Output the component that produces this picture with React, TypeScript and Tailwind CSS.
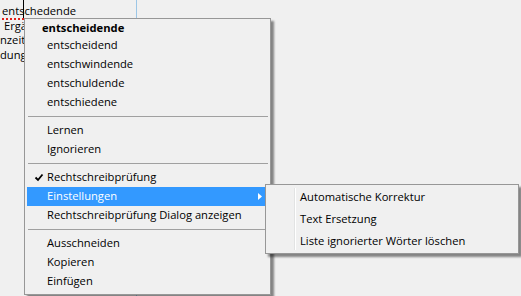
const font = { fontFamily: '"Open Sans", "Noto Sans", sans-serif' };

type Item =
  | { kind: "header"; label: string }
  | { kind: "item"; label: string; checked?: boolean; active?: boolean; sub?: boolean }
  | { kind: "sep" };

const items: Item[] = [
  { kind: "header", label: "entscheidende" },
  { kind: "item", label: "entscheidend" },
  { kind: "item", label: "entschwindende" },
  { kind: "item", label: "entschuldende" },
  { kind: "item", label: "entschiedene" },
  { kind: "sep" },
  { kind: "item", label: "Lernen" },
  { kind: "item", label: "Ignorieren" },
  { kind: "sep" },
  { kind: "item", label: "Rechtschreibprüfung", checked: true },
  { kind: "item", label: "Einstellungen", active: true, sub: true },
  { kind: "item", label: "Rechtschreibprüfung Dialog anzeigen" },
  { kind: "sep" },
  { kind: "item", label: "Ausschneiden" },
  { kind: "item", label: "Kopieren" },
  { kind: "item", label: "Einfügen" },
];

const subItems = ["Automatische Korrektur", "Text Ersetzung", "Liste ignorierter Wörter löschen"];

function Check() {
  return (
    <svg width="8" height="7" viewBox="0 0 8 7" className="w-[20px] shrink-0 pl-[4px] overflow-visible">
      <path d="M0.5 3.5 L3 6 L7.5 0.5" fill="none" stroke="#000" strokeWidth="1.8" />
    </svg>
  );
}

function Arrow() {
  return (
    <svg width="4" height="7" viewBox="0 0 4 7" className="ml-auto mr-[4px]">
      <polygon points="0,0 4,3.5 0,7" fill="#fff" />
    </svg>
  );
}

export default function App() {
  return (
    <div
      className="relative w-[521px] h-[296px] overflow-hidden bg-[#f0f0f0] text-[11.2px] text-black"
      style={font}
    >
      {/* editor pane behind the menu */}
      <div className="w-[137px] h-full border-r border-[#9cc6e6] leading-[14.5px] flex flex-col">
        <div className="pl-[2px] pt-[4px]">
          <span className="border-b-2 border-dotted border-[#e0201a]">entschedende</span>
        </div>
        <div className="pl-[4px] whitespace-nowrap">Ergä</div>
        <div className="whitespace-nowrap">nzeiti</div>
        <div className="whitespace-nowrap">dung</div>
      </div>
      <div className="absolute left-[23px] top-0 w-px h-[18px] bg-black" />

      {/* context menu */}
      <div className="absolute left-[24px] top-[18px] w-[247px] flex flex-col border border-[#979797] bg-[#f0f0f0] pl-[2px] pr-[4px] pt-[2px] pb-[3px] shadow-[3px_3px_2px_rgba(0,0,0,0.45)]">
        {items.map((it, i) => {
          if (it.kind === "header")
            return (
              <div key={i} className="h-[15px] flex items-center pl-[15px] font-bold">
                {it.label}
              </div>
            );
          if (it.kind === "sep")
            return (
              <div key={i} className="h-[9px] pt-[4px] ml-[1px] mr-[-2px]">
                <div className="h-px bg-[#a0a0a0]" />
              </div>
            );
          return (
            <div
              key={i}
              className={
                "h-[19px] flex items-center whitespace-nowrap " +
                (it.checked ? "" : "pl-[20px] ") +
                (it.active ? "bg-[#3399ff] text-white" : "")
              }
            >
              {it.checked && <Check />}
              {it.label}
              {it.sub && <Arrow />}
            </div>
          );
        })}
      </div>

      {/* submenu */}
      <div className="absolute left-[265px] top-[184px] w-[254px] border border-[#979797] bg-[#f0f0f0] p-[1px] shadow-[3px_3px_2px_rgba(0,0,0,0.45)]">
        <div className="flex">
          <div className="w-[29px] shrink-0 py-[2px] flex">
            <div className="ml-auto w-[2px] border-l border-[#e2e3e3] bg-white" />
          </div>
          <div className="flex flex-col">
            <div className="h-0" />
            {subItems.map((s) => (
              <div key={s} className="h-[22px] flex items-center pl-[4px] whitespace-nowrap">
                {s}
              </div>
            ))}
          </div>
        </div>
      </div>
    </div>
  );
}
